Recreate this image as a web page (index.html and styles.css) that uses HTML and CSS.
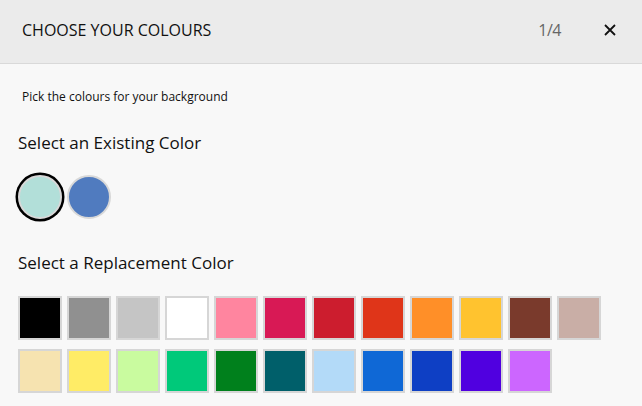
FILE: index.html
```html
<!DOCTYPE html>
<html lang="en">
<head>
<meta charset="utf-8">
<title>Choose your colours</title>
<link rel="stylesheet" href="styles.css">
</head>
<body>
<div class="modal">
  <header class="modal-header">
    <h1 class="modal-title">Choose your colours</h1>
    <div class="modal-tools">
      <span class="step">1/4</span>
      <button class="close" aria-label="Close">
        <svg width="12" height="12" viewBox="0 0 12 12"><path d="M1 1 L11 11 M11 1 L1 11" stroke="#111" stroke-width="1.8" fill="none"/></svg>
      </button>
    </div>
  </header>
  <main class="modal-body">
    <p class="subtitle">Pick the colours for your background</p>
    <h2 class="section-title first">Select an Existing Color</h2>
    <div class="existing">
      <span class="dot selected" style="background:#b2dfd9"></span>
      <span class="dot" style="background:#507bbf"></span>
    </div>
    <h2 class="section-title second">Select a Replacement Color</h2>
    <div class="palette">
      <span class="swatch" style="background:#000000"></span>
      <span class="swatch" style="background:#909090"></span>
      <span class="swatch" style="background:#c5c5c5"></span>
      <span class="swatch" style="background:#ffffff"></span>
      <span class="swatch" style="background:#ff859f"></span>
      <span class="swatch" style="background:#d81955"></span>
      <span class="swatch" style="background:#cc1d2e"></span>
      <span class="swatch" style="background:#df3519"></span>
      <span class="swatch" style="background:#ff8f28"></span>
      <span class="swatch" style="background:#ffc32f"></span>
      <span class="swatch" style="background:#7a3a2c"></span>
      <span class="swatch" style="background:#c9aea6"></span>
      <span class="swatch" style="background:#f6e3b0"></span>
      <span class="swatch" style="background:#ffec66"></span>
      <span class="swatch" style="background:#c9fb9f"></span>
      <span class="swatch" style="background:#00c97a"></span>
      <span class="swatch" style="background:#00801c"></span>
      <span class="swatch" style="background:#005f6a"></span>
      <span class="swatch" style="background:#b3daf8"></span>
      <span class="swatch" style="background:#0f68d6"></span>
      <span class="swatch" style="background:#0e3fc4"></span>
      <span class="swatch" style="background:#5000e0"></span>
      <span class="swatch" style="background:#cc66ff"></span>
    </div>
  </main>
</div>
</body>
</html>
```
FILE: styles.css
```css
* { box-sizing: border-box; }
html, body {
  margin: 0;
  padding: 0;
  background: #f8f8f8;
  font-family: "Open Sans", "DejaVu Sans", sans-serif;
  color: #111;
}
.modal { width: 642px; height: 406px; overflow: hidden; }
.modal-header {
  height: 64px;
  background: #ebebeb;
  border-bottom: 1px solid #d9d9d9;
  display: flex;
  align-items: center;
  justify-content: space-between;
  padding: 0 26px 3px 22px;
}
.modal-title {
  margin: 0;
  font-size: 16px;
  line-height: 22px;
  font-weight: 400;
  text-transform: uppercase;
  color: #111;
}
.modal-tools { display: flex; align-items: center; }
.step {
  font-size: 16px;
  line-height: 22px;
  color: #666;
  letter-spacing: -0.5px;
  margin-right: 1px;
}
.close {
  margin-left: 42px;
  padding: 0;
  border: 0;
  background: none;
  width: 12px;
  height: 12px;
  display: flex;
}
.modal-body { padding: 0 18px; }
.subtitle {
  margin: 25px 0 0 4px;
  font-size: 12px;
  line-height: 16px;
  color: #111;
}
.section-title {
  margin: 0;
  font-size: 17px;
  line-height: 24px;
  font-weight: 400;
  color: #111;
}
.section-title.first { margin-top: 26px; }
.section-title.second { margin-top: 32px; }
.existing {
  display: flex;
  gap: 5px;
  margin-top: 20px;
}
.dot {
  width: 44px;
  height: 44px;
  border-radius: 50%;
  border: 2px solid #d8d8d8;
}
.dot.selected { box-shadow: 0 0 0 2.5px #000; }
.palette {
  display: flex;
  flex-wrap: wrap;
  column-gap: 5px;
  row-gap: 9px;
  margin-top: 21px;
  width: 590px;
}
.swatch {
  width: 44px;
  height: 44px;
  border: 2px solid #d6d6d6;
}
```
